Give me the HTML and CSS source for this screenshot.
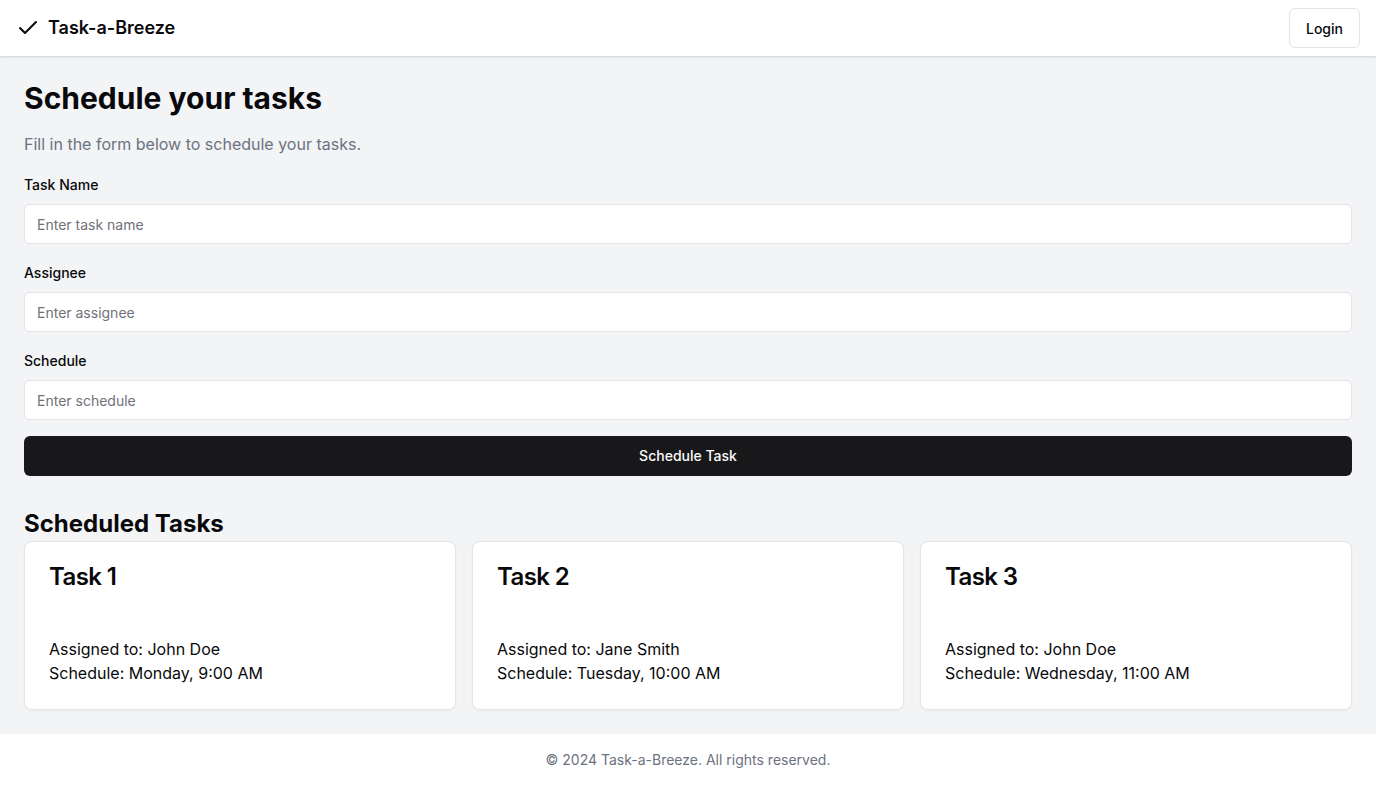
FILE: index.html
```
<!DOCTYPE html>
<html lang="en">
<head>
<meta charset="utf-8">
<title>Task-a-Breeze</title>
<link rel="stylesheet" href="styles.css">
</head>
<body>
<div class="page">
  <header class="header">
    <div class="brand">
      <svg class="brand-icon" viewBox="0 0 24 24" width="24" height="24" fill="none" stroke="currentColor" stroke-width="2" stroke-linecap="round" stroke-linejoin="round"><path d="M20 6 9 17l-5-5"/></svg>
      <span class="brand-name">Task-a-Breeze</span>
    </div>
    <button class="login">Login</button>
  </header>
  <main class="main">
    <h1 class="title">Schedule your tasks</h1>
    <p class="subtitle">Fill in the form below to schedule your tasks.</p>
    <form class="form">
      <div class="field">
        <label class="label" for="task">Task Name</label>
        <input class="input" id="task" placeholder="Enter task name">
      </div>
      <div class="field">
        <label class="label" for="assignee">Assignee</label>
        <input class="input" id="assignee" placeholder="Enter assignee">
      </div>
      <div class="field">
        <label class="label" for="schedule">Schedule</label>
        <input class="input" id="schedule" placeholder="Enter schedule">
      </div>
      <button type="button" class="submit">Schedule Task</button>
    </form>
    <h2 class="section-title">Scheduled Tasks</h2>
    <div class="cards">
      <div class="card">
        <h3 class="card-title">Task 1</h3>
        <div class="card-body">
          <p>Assigned to: John Doe</p>
          <p>Schedule: Monday, 9:00 AM</p>
        </div>
      </div>
      <div class="card">
        <h3 class="card-title">Task 2</h3>
        <div class="card-body">
          <p>Assigned to: Jane Smith</p>
          <p>Schedule: Tuesday, 10:00 AM</p>
        </div>
      </div>
      <div class="card">
        <h3 class="card-title">Task 3</h3>
        <div class="card-body">
          <p>Assigned to: John Doe</p>
          <p>Schedule: Wednesday, 11:00 AM</p>
        </div>
      </div>
    </div>
  </main>
  <footer class="footer">© 2024 Task-a-Breeze. All rights reserved.</footer>
</div>
</body>
</html>
```
FILE: styles.css
```
* { box-sizing: border-box; }
html, body { margin: 0; padding: 0; }
body {
  font-family: Inter, "Noto Sans", sans-serif;
  color: #09090b;
  background: #ffffff;
}
.page { display: flex; flex-direction: column; min-height: 100vh; }
.header {
  height: 56px;
  background: #fff;
  display: flex;
  align-items: center;
  justify-content: space-between;
  padding: 0 16px;
  box-shadow: 0 1px 3px rgba(0,0,0,0.1), 0 1px 2px rgba(0,0,0,0.06);
  position: relative;
  z-index: 1;
}
.brand { display: flex; align-items: center; gap: 8px; }
.brand-icon { display: block; color: #09090b; }
.brand-name { font-size: 18px; font-weight: 600; line-height: 28px; }
.login {
  height: 40px;
  padding: 0 16px;
  font-family: inherit;
  font-size: 14px;
  font-weight: 500;
  color: #09090b;
  background: #fff;
  border: 1px solid #e4e4e7;
  border-radius: 6px;
}
.main {
  flex: 1;
  background: #f3f4f6;
  padding: 24px 24px 24px;
}
.title { margin: 0; font-size: 30px; line-height: 36px; font-weight: 700; }
.subtitle { margin: 16px 0 0; font-size: 16px; line-height: 24px; color: #6b7280; }
.form { margin-top: 18px; display: flex; flex-direction: column; }
.field { display: flex; flex-direction: column; margin-bottom: 18px; }
.field:nth-child(3) { margin-bottom: 16px; }
.label { font-size: 14px; line-height: 20px; font-weight: 500; margin: 1px 0 9px; }
.input {
  height: 40px;
  padding: 0 12px;
  border: 1px solid #e4e4e7;
  border-radius: 6px;
  background: #fff;
  font-family: inherit;
  font-size: 14px;
  color: #09090b;
}
.input::placeholder { color: #71717a; }
.submit {
  height: 40px;
  padding: 0 0 1px;
  border: none;
  border-radius: 6px;
  background: #18181b;
  color: #fafafa;
  font-family: inherit;
  font-size: 14px;
  font-weight: 500;
}
.section-title { margin: 32px 0 0; font-size: 24px; line-height: 32px; font-weight: 700; }
.cards {
  margin-top: 1px;
  display: grid;
  grid-template-columns: repeat(3, 1fr);
  gap: 16px;
}
.card {
  background: #fff;
  border: 1px solid #e4e4e7;
  border-radius: 8px;
  box-shadow: 0 1px 2px rgba(0,0,0,0.05);
  padding: 23px 24px 24px;
}
.card-title { margin: 0; font-size: 24px; line-height: 24px; font-weight: 600; letter-spacing: -0.6px; }
.card-body { margin-top: 48px; }
.card-body p { margin: 0; font-size: 16px; line-height: 24px; color: #09090b; }
.footer {
  background: #fff;
  padding: 16px;
  text-align: center;
  font-size: 14px;
  line-height: 20px;
  color: #6b7280;
}
```
